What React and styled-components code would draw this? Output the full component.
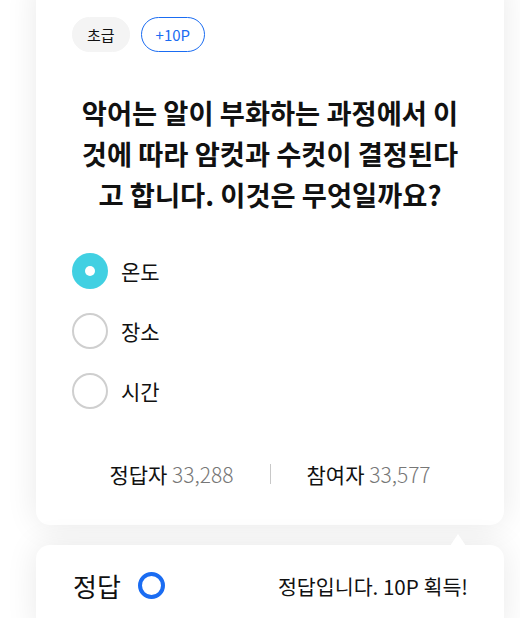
import React from 'react'
import styled, { createGlobalStyle } from 'styled-components'

const GlobalStyle = createGlobalStyle`
  html, body {
    margin: 0;
    padding: 0;
    background: #ffffff;
    font-family: 'Noto Sans CJK KR', 'Noto Sans', sans-serif;
    color: #111;
  }
`

const Page = styled.div`
  width: 520px;
  height: 618px;
  overflow: hidden;
  padding: 0 16px 0 36px;
  box-sizing: border-box;
`

const Card = styled.div`
  position: relative;
  background: #fff;
  border-radius: 14px;
  box-shadow: 0 0 32px rgba(0, 0, 0, 0.09);
  padding: ${p => p.$pad};
  margin-top: ${p => p.$top || '0'};
`

const QuizCard = styled(Card)`
  display: flex;
  flex-direction: column;
`

const Tags = styled.div`
  display: flex;
  gap: 11px;
`

const Tag = styled.span`
  display: inline-flex;
  align-items: center;
  height: 35px;
  padding: 0 14px;
  border-radius: 18px;
  box-sizing: border-box;
  font-size: 15px;
  background: ${p => (p.$outline ? '#fff' : '#f4f4f4')};
  border: 1px solid ${p => (p.$outline ? '#1a6cf2' : '#f4f4f4')};
  color: ${p => (p.$outline ? '#1a6cf2' : '#111')};
`

const Question = styled.h2`
  margin: 40px 0 0;
  font-size: 27.3px;
  font-weight: 700;
  line-height: 41px;
  text-align: center;
  color: #111;
`

const Options = styled.div`
  display: flex;
  flex-direction: column;
  gap: 24px;
  margin-top: 38px;
`

const Option = styled.label`
  display: flex;
  align-items: center;
  gap: 13px;
  font-size: 21px;
  cursor: pointer;
`

const Radio = styled.span`
  width: 36px;
  height: 36px;
  border-radius: 50%;
  box-sizing: border-box;
  display: flex;
  align-items: center;
  justify-content: center;
  background: ${p => (p.$checked ? '#41d0e2' : '#fff')};
  border: ${p => (p.$checked ? 'none' : '2px solid #cfcfcf')};

  &::after {
    content: '';
    display: ${p => (p.$checked ? 'block' : 'none')};
    width: 10px;
    height: 10px;
    border-radius: 50%;
    background: #fff;
  }
`

const Stats = styled.div`
  display: flex;
  justify-content: center;
  align-items: center;
  gap: 36px;
  margin-top: 52px;
  font-size: 21px;
  line-height: 26px;
`

const Stat = styled.span`
  color: #111;
`

const Num = styled.span`
  color: #777;
  font-weight: 300;
`

const Divider = styled.span`
  width: 1px;
  height: 20px;
  background: #c8c8c8;
`

const ResultCard = styled(Card)`
  display: flex;
  align-items: center;
  justify-content: space-between;

  &::before {
    content: '';
    position: absolute;
    top: -11px;
    right: 38px;
    width: 0;
    height: 0;
    border-left: 8px solid transparent;
    border-right: 8px solid transparent;
    border-bottom: 12px solid #fff;
  }
`

const Answer = styled.div`
  display: flex;
  align-items: center;
  gap: 17px;
  font-size: 26px;
`

const Ring = styled.span`
  width: 27px;
  height: 27px;
  border-radius: 50%;
  border: 4px solid #1a6cf2;
  box-sizing: border-box;
`

const Message = styled.div`
  font-size: 20.6px;
`

const options = [
  { label: '온도', checked: true },
  { label: '장소', checked: false },
  { label: '시간', checked: false },
]

export default function App() {
  return (
    <Page>
      <GlobalStyle />
      <QuizCard $pad="37px 36px 38px" $top="-20px">
        <Tags>
          <Tag>초급</Tag>
          <Tag $outline>+10P</Tag>
        </Tags>
        <Question>악어는 알이 부화하는 과정에서 이것에 따라 암컷과 수컷이 결정된다고 합니다. 이것은 무엇일까요?</Question>
        <Options>
          {options.map(o => (
            <Option key={o.label}>
              <Radio $checked={o.checked} />
              {o.label}
            </Option>
          ))}
        </Options>
        <Stats>
          <Stat>정답자 <Num>33,288</Num></Stat>
          <Divider />
          <Stat>참여자 <Num>33,577</Num></Stat>
        </Stats>
      </QuizCard>
      <ResultCard $pad="22px 36px 30px 37px" $top="20px">
        <Answer>
          정답
          <Ring />
        </Answer>
        <Message>정답입니다. 10P 획득!</Message>
      </ResultCard>
    </Page>
  )
}
